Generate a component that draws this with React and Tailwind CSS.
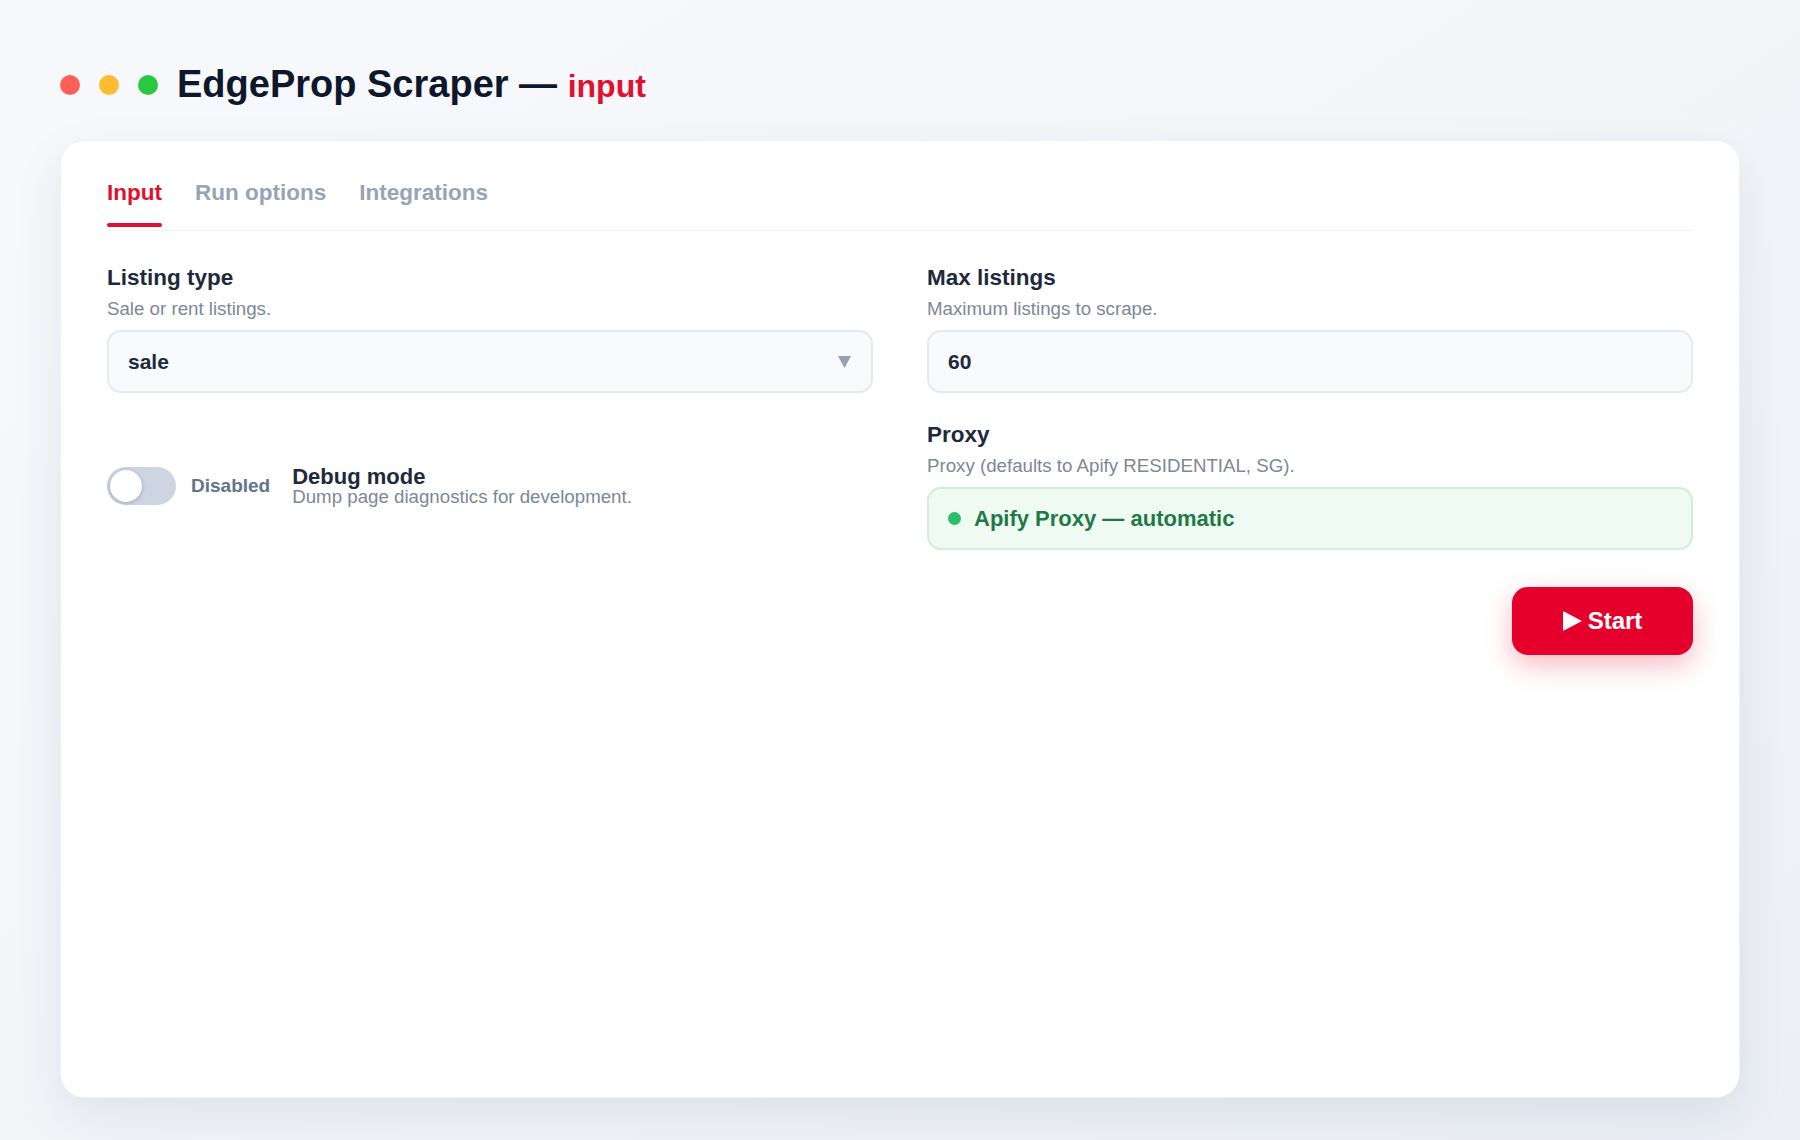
import React from "react";

function Field({ label, desc, children }) {
  return (
    <div className="flex flex-col">
      <div className="text-[22.5px] leading-[26px] font-bold text-[#1e293b]">{label}</div>
      <div className="mt-[6px] text-[18.7px] leading-[24px] text-[#7d8797]">{desc}</div>
      <div className="mt-[9px]">{children}</div>
    </div>
  );
}

export default function App() {
  return (
    <div className="min-h-screen h-[1140px] flex flex-col px-[60px] pt-[63px] pb-[42px] bg-gradient-to-br from-[#f8f9fc] via-[#f3f5f9] to-[#eceff6] font-['Liberation_Sans',Arial,sans-serif]">
      {/* Header */}
      <div className="flex items-center h-[44px]">
        <div className="flex items-center gap-[19px]">
          <span className="w-[20px] h-[20px] rounded-full bg-[#ff5f57]" />
          <span className="w-[20px] h-[20px] rounded-full bg-[#febc2e]" />
          <span className="w-[20px] h-[20px] rounded-full bg-[#28c840]" />
        </div>
        <h1 className="ml-[19px] text-[38px] leading-[44px] font-bold text-[#0f172a] whitespace-nowrap">
          EdgeProp Scraper — <span className="text-[32px] text-[#e0102e]">input</span>
        </h1>
      </div>

      {/* Card */}
      <div className="mt-[33px] flex-1 rounded-[24px] bg-white border border-[#eef1f6] shadow-[0_18px_50px_rgba(30,41,80,0.09)] px-[46px] pt-[39px]">
        {/* Tabs */}
        <div className="flex gap-[33px] border-b border-[#edf0f5] pb-[3px]">
          <div className="flex flex-col">
            <span className="text-[22.5px] leading-[26px] font-bold text-[#e0102e]">Input</span>
            <span className="mt-[17px] h-[4px] rounded-full bg-[#e0102e]" />
          </div>
          <div className="flex flex-col">
            <span className="text-[22.5px] leading-[26px] font-bold text-[#97a3b6]">Run options</span>
            <span className="mt-[17px] h-[4px]" />
          </div>
          <div className="flex flex-col">
            <span className="text-[22.5px] leading-[26px] font-bold text-[#97a3b6]">Integrations</span>
            <span className="mt-[17px] h-[4px]" />
          </div>
        </div>

        {/* Fields */}
        <div className="mt-[34px] grid grid-cols-2 gap-x-[54px] gap-y-[29px]">
          <Field label="Listing type" desc="Sale or rent listings.">
            <div className="h-[63px] rounded-[14px] border-2 border-[#e6eaf0] bg-[#f8fafc] flex items-center justify-between px-[19px]">
              <span className="text-[21px] font-bold text-[#1e293b]">sale</span>
              <svg width="13" height="12" viewBox="0 0 13 12" className="mr-[1px]">
                <polygon points="0,0 13,0 6.5,12" fill="#94a0b4" />
              </svg>
            </div>
          </Field>

          <Field label="Max listings" desc="Maximum listings to scrape.">
            <div className="h-[63px] rounded-[14px] border-2 border-[#e6eaf0] bg-[#f8fafc] flex items-center px-[19px]">
              <span className="text-[21px] font-bold text-[#1e293b]">60</span>
            </div>
          </Field>

          <div className="flex items-center">
            <div className="w-[69px] h-[38px] rounded-full bg-[#cdd5e2] flex items-center px-[3px]">
              <span className="w-[32px] h-[32px] rounded-full bg-white shadow-[0_1px_4px_rgba(15,23,42,0.25)]" />
            </div>
            <span className="ml-[15px] text-[19px] font-bold text-[#64748b]">Disabled</span>
            <div className="ml-[22px] flex flex-col">
              <span className="text-[22px] leading-[21px] font-bold text-[#1e293b]">Debug mode</span>
              <span className="text-[18.7px] leading-[20px] text-[#7d8797]">Dump page diagnostics for development.</span>
            </div>
          </div>

          <Field label="Proxy" desc="Proxy (defaults to Apify RESIDENTIAL, SG).">
            <div className="h-[63px] rounded-[14px] border-2 border-[#d3ecdd] bg-[#effaf3] flex items-center px-[19px]">
              <span className="w-[13px] h-[13px] rounded-full bg-[#2bbd68]" />
              <span className="ml-[13px] text-[22px] font-bold text-[#1f7a45]">Apify Proxy — automatic</span>
            </div>
          </Field>
        </div>

        <div className="mt-[37px] flex justify-end">
          <button className="w-[181px] h-[68px] rounded-[16px] bg-[#e4002b] text-white text-[24px] font-bold flex items-center justify-center gap-[6px] shadow-[0_10px_28px_rgba(228,0,43,0.28)]">
            <svg width="19" height="20" viewBox="0 0 19 20">
              <polygon points="0,0 19,10 0,20" fill="white" />
            </svg>
            <span>Start</span>
          </button>
        </div>
      </div>
    </div>
  );
}
